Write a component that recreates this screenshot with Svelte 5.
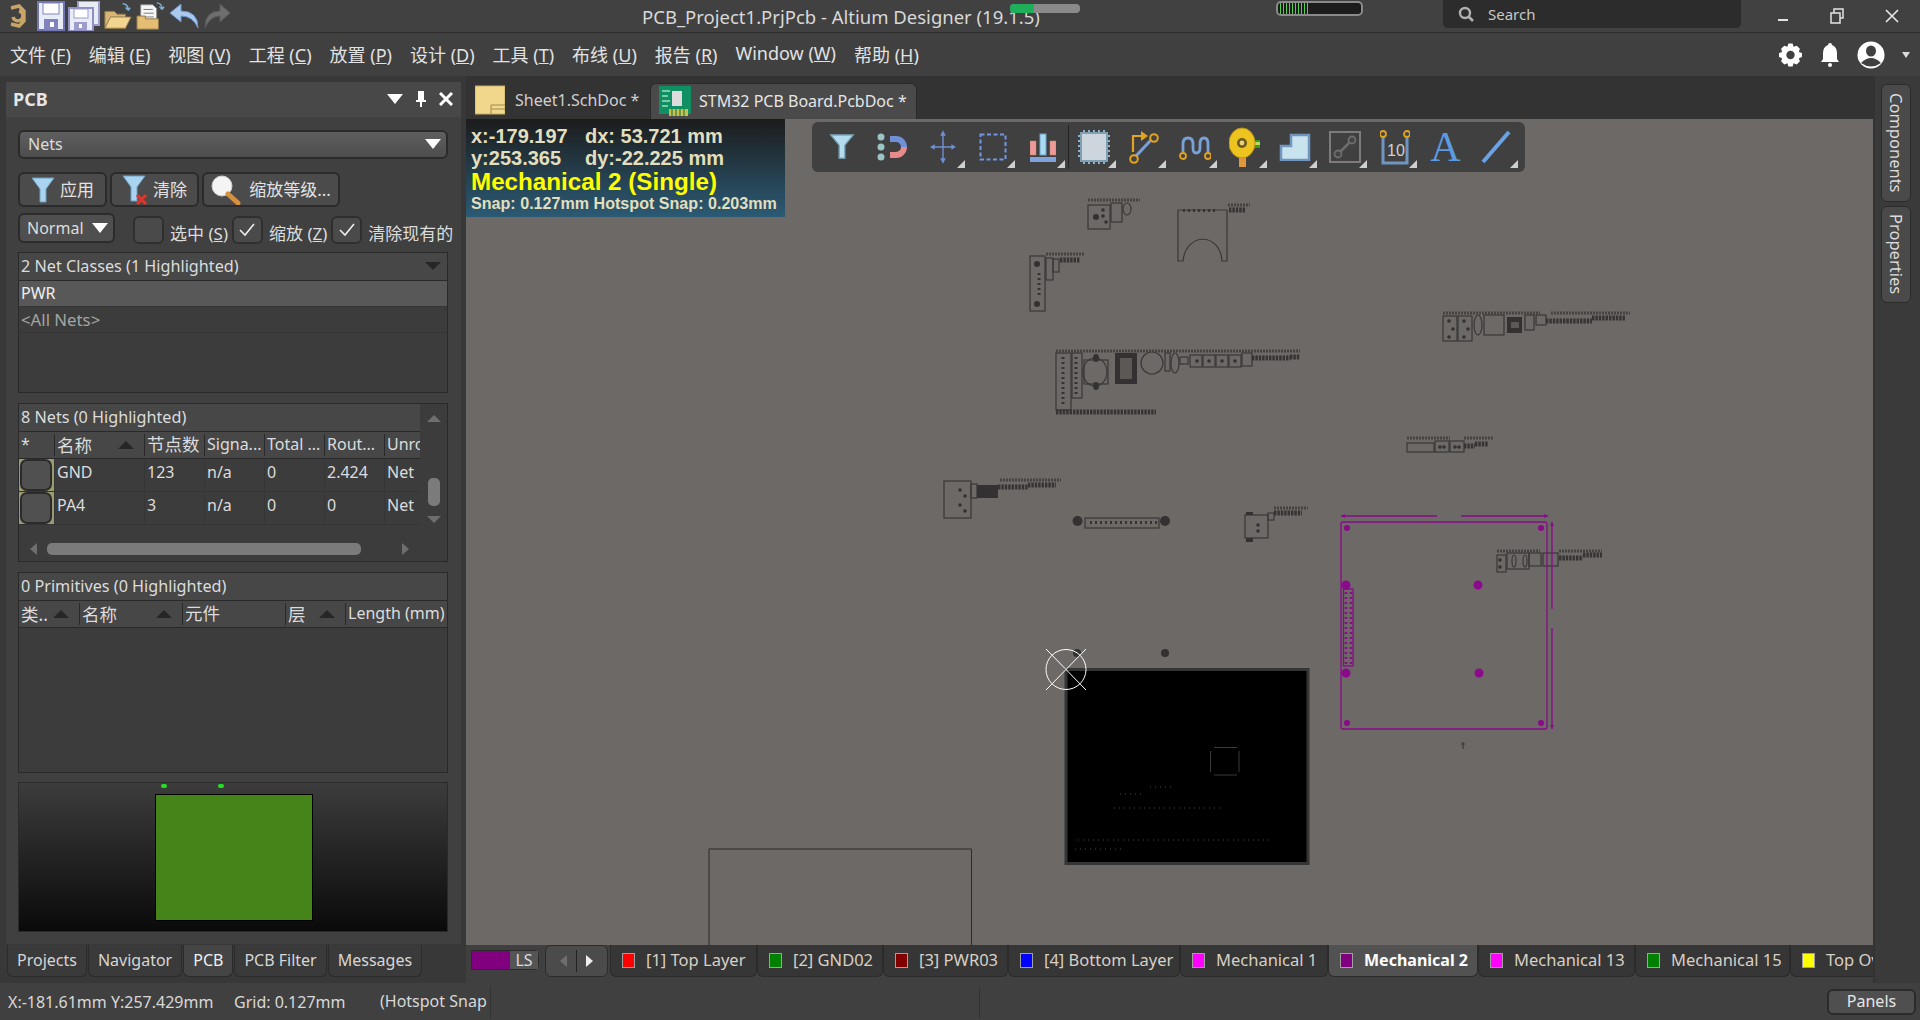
<script>
  const menus = [
    ['文件', 'F'], ['编辑', 'E'], ['视图', 'V'], ['工程', 'C'], ['放置', 'P'], ['设计', 'D'],
    ['工具', 'T'], ['布线', 'U'], ['报告', 'R'], ['Window', 'W'], ['帮助', 'H']
  ];

  const nets = [
    { name: 'GND', nodes: 123, signal: 'n/a', total: 0, routed: '2.424', unrouted: 'Net' },
    { name: 'PA4', nodes: 3, signal: 'n/a', total: 0, routed: '0', unrouted: 'Net' }
  ];

  const layers = [
    { name: '[1] Top Layer', color: '#ff0000', width: 147 },
    { name: '[2] GND02', color: '#008000', width: 126 },
    { name: '[3] PWR03', color: '#800000', width: 125 },
    { name: '[4] Bottom Layer', color: '#0000ff', width: 172 },
    { name: 'Mechanical 1', color: '#ff00ff', width: 148 },
    { name: 'Mechanical 2', color: '#800080', width: 150, active: true },
    { name: 'Mechanical 13', color: '#ff00ff', width: 157 },
    { name: 'Mechanical 15', color: '#008000', width: 155 },
    { name: 'Top Overlay', color: '#ffff00', width: 120 }
  ];

  const bottomTabs = ['Projects', 'Navigator', 'PCB', 'PCB Filter', 'Messages'];

  // footprints on the canvas, in page coordinates
  const outlines = [
    [1088, 205, 22, 24], [1111, 203, 11, 19],
    [1030, 256, 15, 55], [1046, 258, 7, 22], [1053, 259, 6, 13],
    [1056, 353, 15, 57], [1072, 353, 10, 45], [1084, 360, 24, 24],
    [1165, 353, 5, 18], [1180, 357, 8, 7],
    [1190, 355, 12, 12], [1203, 355, 12, 12], [1216, 355, 12, 12], [1229, 355, 12, 12], [1242, 353, 10, 13],
    [1443, 316, 14, 25], [1458, 316, 14, 25], [1484, 315, 20, 20], [1525, 315, 9, 15], [1536, 315, 10, 10],
    [1407, 443, 27, 9], [1435, 441, 14, 11], [1450, 441, 14, 11],
    [944, 481, 27, 37], [971, 484, 6, 14],
    [1085, 518, 74, 10],
    [1245, 515, 23, 23], [1268, 513, 6, 7],
    [1497, 555, 9, 17], [1507, 553, 22, 16], [1529, 553, 12, 13], [1543, 553, 15, 13]
  ];

  const solids = [
    [1115, 353, 22, 31], [1507, 317, 15, 16], [977, 485, 21, 13],
    [1246, 512, 7, 3], [1246, 538, 7, 4]
  ];

  const ovals = [
    [1095, 372, 12, 14], [1152, 363, 11, 11], [1175, 363, 4, 10], [1478, 325, 4, 10],
    [1127, 209, 4, 6], [1514, 561, 2, 6], [1525, 561, 2, 6]
  ];

  const padRows = [
    [1252, 358, 1290, 358], [1290, 357, 1300, 357], [1056, 412, 1156, 412],
    [1546, 321, 1592, 321], [1592, 318, 1625, 318],
    [1464, 446, 1475, 446], [1475, 444, 1488, 444],
    [998, 487, 1028, 487], [1028, 485, 1056, 485],
    [1274, 513, 1302, 513], [1559, 558, 1583, 558], [1583, 555, 1602, 555],
    [1229, 210, 1245, 210], [1060, 260, 1080, 260]
  ];

  const labelRows = [
    [1056, 351, 1300, 351], [1551, 313, 1630, 313], [1443, 313, 1540, 313], [1464, 438, 1493, 438],
    [1407, 438, 1450, 438], [1000, 480, 1061, 480], [1274, 508, 1308, 508], [1559, 551, 1602, 551],
    [1228, 205, 1250, 205], [1046, 254, 1084, 254], [1497, 551, 1540, 551], [1088, 200, 1140, 200]
  ];

  // отверстия внутри футпринтов
  const drills = [
    [1449, 321], [1453, 329], [1449, 337], [1464, 321], [1468, 329], [1464, 337],
    [1103, 210], [1103, 216], [1106, 222], [1258, 525], [1258, 531],
    [960, 490], [965, 496], [960, 505], [965, 511], [1500, 560], [1500, 567],
    [1197, 361], [1209, 361], [1222, 361], [1235, 361], [1440, 447], [1444, 447], [1455, 447], [1459, 447]
  ];

  const boardHoles = [[1347, 528, 3], [1541, 528, 3], [1347, 723, 3], [1541, 723, 3], [1346, 585, 4.5], [1478, 585, 4.5], [1346, 673, 4.5], [1479, 673, 4.5]];
  const boardDots = [[1114, 808, 1224], [1078, 840, 1270], [1075, 849, 1122], [1150, 787, 1175], [1120, 794, 1143]];
</script>

<div class="app">
  <header class="titlebar">
    <div class="quick">
      <svg class="logo" viewBox="0 0 18 24" width="18" height="24">
        <path d="M3 4 L11 2 L16 7 V17 L11 22 L3 20 M11 7 a5 5 0 1 1 -6 6" fill="none" stroke="#c8a567" stroke-width="3.4" />
      </svg>
      <svg viewBox="0 0 28 30" width="28" height="30">
        <rect x="1" y="1" width="26" height="28" fill="#e8ecf6" stroke="#6f74b4" stroke-width="2" />
        <rect x="6" y="2" width="16" height="11" fill="#ffffff" stroke="#7f84bd" />
        <rect x="7" y="18" width="14" height="11" fill="#7f84bd" />
        <rect x="13" y="21" width="4" height="5" fill="#ffffff" />
      </svg>
      <svg viewBox="0 0 32 30" width="32" height="30">
        <rect x="10" y="0" width="21" height="24" fill="#e8ecf6" stroke="#9d9ccc" stroke-width="2" />
        <rect x="1" y="7" width="24" height="23" fill="#e8ecf6" stroke="#8f8fc4" stroke-width="2" />
        <rect x="6" y="8" width="14" height="9" fill="#fff" stroke="#9d9ccc" />
        <rect x="6" y="21" width="13" height="8" fill="#9d9ccc" />
        <rect x="11" y="23" width="3" height="4" fill="#fff" />
      </svg>
      <svg viewBox="0 0 32 30" width="30" height="30">
        <path d="M2 10 H12 L15 13 H24 V28 H2 Z" fill="#d9b676" stroke="#8d7648" />
        <path d="M2 28 L8 16 H30 L24 28 Z" fill="#f3d592" stroke="#8d7648" />
        <path d="M21 2 q5 0 6 6 M27 9 l-3 -3 M27 9 l2 -3" fill="none" stroke="#7fb2d8" stroke-width="1.5" />
      </svg>
      <svg viewBox="0 0 32 30" width="30" height="30">
        <path d="M5 3 H18 L22 7 V22 H5 Z" fill="#f6f6f6" stroke="#8b8b8b" />
        <path d="M8 8 H18 M8 12 H19 M8 16 H19" stroke="#777" />
        <path d="M1 15 H10 V18 H24 V29 H1 Z" fill="#e4bc72" stroke="#8d7648" />
        <path d="M22 1 q5 0 6 6 M28 8 l-3 -3 M28 8 l2 -3" fill="none" stroke="#7fb2d8" stroke-width="1.5" />
      </svg>
      <svg viewBox="0 0 31 30" width="31" height="30">
        <path d="M29 27 Q29 10 12 10 V3 L1 12 L12 21 V15 Q24 15 29 27 Z" fill="#a9c9ee" stroke="#6f96c8" />
      </svg>
      <svg class="redo" viewBox="0 0 28 30" width="28" height="30">
        <path d="M2 27 Q2 10 17 10 V3 L27 12 L17 21 V15 Q7 15 2 27 Z" fill="#6e6e6e" stroke="#5a5a5a" />
      </svg>
    </div>
    <div class="doc-title">PCB_Project1.PrjPcb - Altium Designer (19.1.5)</div>
    <div class="progress"><span></span></div>
    <div class="meter"><span></span></div>
    <div class="search">
      <svg viewBox="0 0 16 16" width="16" height="16"><circle cx="7" cy="7" r="5" fill="none" stroke="#b0b0b0" stroke-width="2.4" /><path d="M10.5 10.5 L15 15" stroke="#b0b0b0" stroke-width="2.6" /></svg>
      <span>Search</span>
    </div>
    <div class="winctl">
      <svg viewBox="0 0 12 12" width="12" height="12"><rect x="1" y="9" width="10" height="2" fill="#e4e4e4" /></svg>
      <svg viewBox="0 0 14 16" width="14" height="16"><rect x="4" y="1" width="9" height="9" fill="none" stroke="#e4e4e4" stroke-width="1.5" /><rect x="1" y="5" width="9" height="10" fill="#404040" stroke="#e4e4e4" stroke-width="1.5" /></svg>
      <svg viewBox="0 0 14 14" width="14" height="14"><path d="M1 1 L13 13 M13 1 L1 13" stroke="#e8e8e8" stroke-width="1.6" /></svg>
    </div>
  </header>

  <nav class="menubar">
    <div class="menus">
      {#each menus as m}
        <span>{m[0]} (<u>{m[1]}</u>)</span>
      {/each}
    </div>
    <div class="usertools">
      <svg viewBox="0 0 24 24" width="25" height="26">
        <path d="M10 1h4l1 3 3-1 3 3-1 3 3 1v4l-3 1 1 3-3 3-3-1-1 3h-4l-1-3-3 1-3-3 1-3-3-1v-4l3-1-1-3 3-3 3 1z" fill="#fff" />
        <circle cx="12" cy="12" r="4" fill="#404040" />
      </svg>
      <svg viewBox="0 0 20 26" width="20" height="26">
        <path d="M10 1 q2 0 2 2 q5 2 5 8 v6 l2 3 H1 l2 -3 v-6 q0 -6 5 -8 q0 -2 2 -2 z" fill="#fff" />
        <circle cx="10" cy="23" r="2" fill="#fff" />
      </svg>
      <svg viewBox="0 0 28 28" width="28" height="28">
        <circle cx="14" cy="14" r="13.5" fill="#fff" />
        <ellipse cx="14" cy="10" rx="5" ry="5.5" fill="#404040" />
        <path d="M4 22 q10 -10 20 0 q-10 7 -20 0z" fill="#404040" />
      </svg>
      <i class="caret-small"></i>
    </div>
  </nav>

  <div class="workspace">
    <aside class="leftcol">
      <section class="panel">
        <div class="panel-head">
          <strong>PCB</strong>
          <div class="panel-tools">
            <i class="caret-white"></i>
            <svg viewBox="0 0 12 16" width="12" height="16"><path d="M3 0 H9 V9 H11 V11 H7 V16 H5 V11 H1 V9 H3 Z" fill="#fff" /></svg>
            <svg viewBox="0 0 14 14" width="14" height="14"><path d="M1 1 L13 13 M13 1 L1 13" stroke="#fff" stroke-width="3" /></svg>
          </div>
        </div>

        <div class="panel-body">
          <div class="dropdown">Nets <i class="caret-white"></i></div>

          <div class="actions">
            <button class="apply">
              <svg viewBox="0 0 24 28" width="24" height="28"><path d="M1 2 H23 L15 13 V26 H9 V13 Z" fill="#a9d3ee" stroke="#6f9fc4" /></svg>
              <span>应用</span>
            </button>
            <button class="clear">
              <svg viewBox="0 0 26 30" width="26" height="30">
                <path d="M1 1 H23 L15 12 V26 H9 V12 Z" fill="#a9d3ee" stroke="#6f9fc4" />
                <path d="M15 20 L24 29 M24 20 L15 29" stroke="#e0352b" stroke-width="3" />
              </svg>
              <span>清除</span>
            </button>
            <button class="zoomlvl">
              <svg viewBox="0 0 30 30" width="30" height="30">
                <circle cx="11" cy="11" r="10" fill="#f4f4f4" stroke="#cfcfcf" />
                <path d="M17 19 L27 28" stroke="#d8903c" stroke-width="5" stroke-linecap="round" />
              </svg>
              <span>缩放等级...</span>
            </button>
          </div>

          <div class="options">
            <div class="mode">Normal <i class="caret-white"></i></div>
            <span class="check"></span><label class="opt-a">选中 (<u>S</u>)</label>
            <span class="check on"><svg viewBox="0 0 16 14" width="16" height="14"><path d="M1 7 L6 12 L15 1" fill="none" stroke="#eee" stroke-width="1.6" /></svg></span>
            <label class="opt-b">缩放 (<u>Z</u>)</label>
            <span class="check on"><svg viewBox="0 0 16 14" width="16" height="14"><path d="M1 7 L6 12 L15 1" fill="none" stroke="#eee" stroke-width="1.6" /></svg></span>
            <label class="opt-c">清除现有的</label>
          </div>

          <div class="box classes">
            <div class="box-head">2 Net Classes (1 Highlighted) <i class="caret-dark"></i></div>
            <div class="row selected">PWR</div>
            <div class="row muted">&lt;All Nets&gt;</div>
          </div>

          <div class="box netsbox">
            <div class="nets-main">
              <div class="box-head">8 Nets (0 Highlighted)</div>
              <div class="grid-row grid-head">
                <div>*</div>
                <div class="sorted"><span class="zh">名称</span> <i class="caret-up"></i></div>
                <div class="zh">节点数</div><div>Signa...</div><div>Total ...</div><div>Rout...</div><div class="clip">Unrouted</div>
              </div>
              {#each nets as n}
                <div class="grid-row net">
                  <div class="swatch"><span></span></div>
                  <div>{n.name}</div><div>{n.nodes}</div><div>{n.signal}</div><div>{n.total}</div><div>{n.routed}</div><div>{n.unrouted}</div>
                </div>
              {/each}
              <div class="hscroll">
                <i class="arrow-left"></i>
                <span class="hthumb"></span>
                <i class="arrow-right"></i>
              </div>
            </div>
            <div class="vscroll">
              <i class="arrow-up"></i>
              <span class="vthumb"></span>
              <i class="arrow-down"></i>
            </div>
          </div>

          <div class="box prims">
            <div class="box-head">0 Primitives (0 Highlighted)</div>
            <div class="prim-head">
              <div class="sorted"><span class="zh">类..</span> <i class="caret-up"></i></div>
              <div class="sorted"><span class="zh">名称</span> <i class="caret-up"></i></div>
              <div class="zh">元件</div>
              <div class="sorted"><span class="zh">层</span> <i class="caret-up"></i></div>
              <div>Length (mm)</div>
            </div>
          </div>

          <div class="preview">
            <i class="tick t1"></i><i class="tick t2"></i>
            <div class="preview-board"></div>
          </div>
        </div>
      </section>

      <div class="bottom-tabs">
        {#each bottomTabs as t}
          <span class:current={t === 'PCB'}>{t}</span>
        {/each}
      </div>
    </aside>

    <main class="center">
      <div class="doc-tabs">
        <div class="doc-tab">
          <svg viewBox="0 0 30 30" width="30" height="30">
            <rect x="0" y="1" width="30" height="28" fill="#f0d78c" />
            <path d="M0 1 H30 V29 H0 Z" fill="none" stroke="#c8ad68" />
            <path d="M16 29 V20 H30 M16 24 H30" fill="none" stroke="#a08a50" />
          </svg>
          Sheet1.SchDoc *
        </div>
        <div class="doc-tab active">
          <svg viewBox="0 0 32 32" width="32" height="32">
            <rect x="0" y="1" width="32" height="28" fill="#0f8f62" />
            <path d="M3 6 H11 M3 11 H9 M3 16 H11 M3 21 H9" stroke="#9be0c0" stroke-width="1.4" />
            <rect x="13" y="6" width="10" height="15" fill="#dcdcdc" />
            <rect x="10" y="24" width="19" height="7" fill="#c9c24a" />
            <path d="M13 24 V31 M17 24 V31 M21 24 V31 M25 24 V31" stroke="#0f6f4a" />
          </svg>
          STM32 PCB Board.PcbDoc *
        </div>
      </div>

      <div class="canvas">
        <svg class="pcb" viewBox="466 119 1407 826" preserveAspectRatio="none">
          <!-- контур платы внизу -->
          <path d="M709 945 V849 H971.5 V945" class="line" />

          {#each outlines as r}
            <rect x={r[0]} y={r[1]} width={r[2]} height={r[3]} class="part" />
          {/each}
          {#each solids as r}
            <rect x={r[0]} y={r[1]} width={r[2]} height={r[3]} class="solid" />
          {/each}
          {#each ovals as o}
            <ellipse cx={o[0]} cy={o[1]} rx={o[2]} ry={o[3]} class="part" />
          {/each}
          {#each padRows as p}
            <line x1={p[0]} y1={p[1]} x2={p[2]} y2={p[3]} class="pads" />
          {/each}
          {#each labelRows as p}
            <line x1={p[0]} y1={p[1]} x2={p[2]} y2={p[3]} class="labels" />
          {/each}
          {#each drills as d}
            <circle cx={d[0]} cy={d[1]} r="1.8" class="solid" />
          {/each}

          <path d="M1178 210 H1227 V261 H1222 C1220 232 1186 232 1183 261 H1178 Z" class="part" />
          <path d="M1183 210.5 H1215" class="pads thin" />
          <rect x="1120" y="358" width="12" height="21" class="chip-core" />
          <rect x="1511" y="322" width="8" height="6" class="chip-core" />
          <line x1="1063" y1="357" x2="1063" y2="406" class="pads thin" />
          <line x1="1076" y1="357" x2="1076" y2="396" class="pads thin" />
          <line x1="1039" y1="273" x2="1039" y2="296" class="pads thin" />
          <line x1="1090" y1="522.5" x2="1157" y2="522.5" class="pads thin" />
          <ellipse cx="1096" cy="358" rx="3" ry="4" class="solid" />
          <ellipse cx="1096" cy="386" rx="3" ry="4" class="solid" />
          <circle cx="1037" cy="264" r="3" class="solid" />
          <circle cx="1037" cy="304" r="3" class="solid" />
          <circle cx="1096" cy="217" r="3" class="solid" />
          <circle cx="1077.5" cy="521" r="5" class="solid" />
          <circle cx="1165" cy="521" r="5" class="solid" />
          <circle cx="1077" cy="653" r="4" class="solid" />
          <circle cx="1165" cy="653" r="4" class="solid" />
          <path d="M1463 742 V749 M1461 744 H1465" class="part" />

          <!-- механический слой -->
          <rect x="1341" y="522" width="206" height="207" rx="2" class="mech" />
          <path d="M1341 516 H1437 M1461 516 H1548 M1552 522 V609 M1552 628 V729" class="mech" />
          <path d="M1341 516 l4 -2 v4 z M1548 516 l-4 -2 v4 z M1552 522 l-2 4 h4 z M1552 729 l-2 -4 h4 z" class="mech-fill" />
          <rect x="1343.5" y="589" width="9.5" height="77" class="mech" />
          <line x1="1346" y1="592" x2="1346" y2="664" class="mech-dots" />
          <line x1="1351" y1="592" x2="1351" y2="664" class="mech-dots" />
          {#each boardHoles as h}
            <circle cx={h[0]} cy={h[1]} r={h[2]} class="mech-fill" />
          {/each}

          <!-- чёрная плата -->
          <rect x="1066" y="669.5" width="242" height="194" class="pcb-board" />
          <path d="M1214 747.5 H1237 M1214 775 H1237 M1210.5 751 V772 M1239 751 V772" class="chip-mark" />
          {#each boardDots as d}
            <line x1={d[0]} y1={d[1]} x2={d[2]} y2={d[1]} class="board-dots" />
          {/each}

          <!-- курсор -->
          <circle cx="1066" cy="669.5" r="20" class="cursor" />
          <path d="M1046 649 L1086 690 M1086 649 L1046 690" class="cursor" />
        </svg>

        <div class="hud">
          <div class="hud-row"><span class="hud-x">x:-179.197</span><span>dx: 53.721 mm</span></div>
          <div class="hud-row"><span class="hud-x">y:253.365</span><span>dy:-22.225 mm</span></div>
          <div class="hud-layer">Mechanical 2 (Single)</div>
          <div class="hud-snap">Snap: 0.127mm Hotspot Snap: 0.203mm</div>
        </div>

        <div class="toolbar">
          <span class="tool">
            <svg viewBox="0 0 28 32" width="26" height="30"><path d="M2 3 H26 L17 14 V28 H11 V14 Z" fill="#b5dcee" stroke="#7ba7bd" stroke-width="1.5" /></svg>
          </span>
          <span class="tool">
            <svg viewBox="0 0 32 30" width="32" height="30">
              <path d="M14 4 H20 A11 11 0 0 1 31 15 H25 A5 5 0 0 0 20 10 H14 Z" fill="#6f8fd6" />
              <path d="M14 20 H20 A5 5 0 0 0 25 15 H31 A11 11 0 0 1 20 26 H14 Z" fill="#e88a8a" />
              <circle cx="5" cy="5" r="3.5" fill="#9cc4c4" /><circle cx="5" cy="15" r="3.5" fill="#9cc4c4" /><circle cx="5" cy="25" r="3.5" fill="#9cc4c4" />
            </svg>
          </span>
          <span class="tool more">
            <svg viewBox="0 0 28 36" width="26" height="36"><path d="M14 3 V33 M2 18 H26" fill="none" stroke="#6f8fd6" stroke-width="1.5" /><path d="M14 0 l-3 6 h6 z M14 36 l-3 -6 h6 z M0 18 l5 -3 v6 z M28 18 l-5 -3 v6 z" fill="#6f8fd6" /></svg>
          </span>
          <span class="tool more">
            <svg viewBox="0 0 28 28" width="28" height="28"><rect x="1.5" y="1.5" width="25" height="25" fill="none" stroke="#7196e8" stroke-width="2" stroke-dasharray="4 2.5" /></svg>
          </span>
          <span class="tool more">
            <svg viewBox="0 0 26 30" width="26" height="30">
              <rect x="0" y="9" width="6" height="14" fill="#ee9a9a" stroke="#b86" stroke-width=".5" />
              <rect x="10" y="2" width="6" height="21" fill="#a9dcec" stroke="#6f9fd6" />
              <rect x="20" y="9" width="6" height="14" fill="#ee9a9a" stroke="#b86" stroke-width=".5" />
              <rect x="0" y="25" width="26" height="5" fill="#7fa4dc" />
            </svg>
          </span>
          <span class="sep"></span>
          <span class="tool more">
            <svg viewBox="0 0 32 34" width="32" height="34">
              <path d="M6 0 V34 M11 0 V34 M16 0 V34 M21 0 V34 M26 0 V34 M0 6 H32 M0 11 H32 M0 16 H32 M0 21 H32 M0 26 H32" stroke="#8fb3c8" stroke-width="2" />
              <rect x="3" y="3" width="26" height="28" fill="#cdd6dc" stroke="#7f9fb4" stroke-width="2" />
            </svg>
          </span>
          <span class="tool more">
            <svg viewBox="0 0 30 34" width="30" height="34">
              <path d="M4 22 V6 H14" fill="none" stroke="#e2a31f" stroke-width="2.2" />
              <path d="M12 1 L19 6 L12 11 Z" fill="#e2a31f" />
              <path d="M7 26 L22 10" stroke="#7aa0d8" stroke-width="3" />
              <circle cx="5" cy="29" r="3.8" fill="#444" stroke="#e2a31f" stroke-width="2" />
              <circle cx="25" cy="8" r="3.8" fill="#444" stroke="#e2a31f" stroke-width="2" />
            </svg>
          </span>
          <span class="tool more">
            <svg viewBox="0 0 32 28" width="32" height="28">
              <path d="M4 19 V11 Q4 5 9 5 Q14 5 14 11 V15 Q14 20 17 20 Q21 20 21 15 V11 Q21 5 25 5 Q29 5 29 11 V19" fill="none" stroke="#7aa0d8" stroke-width="2.8" />
              <circle cx="4" cy="23" r="3" fill="#444" stroke="#e2a31f" stroke-width="1.8" />
              <circle cx="29" cy="23" r="3" fill="#444" stroke="#e2a31f" stroke-width="1.8" />
            </svg>
          </span>
          <span class="tool more">
            <svg viewBox="0 0 32 40" width="32" height="40">
              <rect x="17" y="13" width="14" height="8" fill="#35a01c" />
              <rect x="17" y="15" width="14" height="3" fill="#bcd86a" />
              <rect x="10" y="26" width="7" height="14" fill="#e2963a" />
              <ellipse cx="13" cy="16" rx="13" ry="15" fill="#ecc31f" stroke="#b8941a" />
              <circle cx="13" cy="16" r="5" fill="#6a5a20" />
              <circle cx="13" cy="16" r="2.4" fill="#e8d27a" />
            </svg>
          </span>
          <span class="tool more">
            <svg viewBox="0 0 32 28" width="32" height="28"><path d="M2 27 V13 H12 V2 H30 V27 Z" fill="#c9e3ee" stroke="#7096c0" stroke-width="2.5" /></svg>
          </span>
          <span class="tool more">
            <svg viewBox="0 0 32 32" width="32" height="32">
              <rect x="1" y="1" width="30" height="30" fill="none" stroke="#7c7c7c" stroke-width="2" />
              <path d="M9 23 L23 9" stroke="#6e6e6e" stroke-width="2.5" />
              <circle cx="9" cy="23" r="3.5" fill="#444" stroke="#6e6e6e" stroke-width="1.8" />
              <circle cx="23" cy="9" r="3.5" fill="#444" stroke="#6e6e6e" stroke-width="1.8" />
            </svg>
          </span>
          <span class="tool more">
            <svg viewBox="0 0 30 36" width="30" height="36">
              <path d="M3 8 V34 H27 V8" fill="none" stroke="#7096c0" stroke-width="3" />
              <circle cx="3" cy="5" r="3" fill="#444" stroke="#e2a31f" stroke-width="1.8" />
              <circle cx="27" cy="5" r="3" fill="#444" stroke="#e2a31f" stroke-width="1.8" />
              <text x="7" y="27" class="ten">10</text>
            </svg>
          </span>
          <span class="tool letter-a">A</span>
          <span class="tool more">
            <svg viewBox="0 0 30 34" width="30" height="34"><path d="M2 32 L28 2" stroke="#6aa3e4" stroke-width="4" /></svg>
          </span>
        </div>
      </div>

      <div class="layerbar">
        <div class="ls"><span class="ls-color"></span><span class="ls-text">LS</span></div>
        <div class="layer-nav"><i class="arrow-left dim"></i><span></span><i class="arrow-right bright"></i></div>
        <div class="layer-tabs">
          {#each layers as l}
            <div class="layer" class:active={l.active} style="flex-basis:{l.width}px">
              <span class="chip" style="background:{l.color}"></span>{l.name}
            </div>
          {/each}
        </div>
      </div>
    </main>

    <aside class="rightcol">
      <div class="sidetab comp">Components</div>
      <div class="sidetab prop">Properties</div>
    </aside>
  </div>

  <footer class="statusbar">
    <div class="stat coords">X:-181.61mm Y:257.429mm</div>
    <div class="stat grid-size">Grid: 0.127mm</div>
    <div class="stat hotspot">(Hotspot Snap</div>
    <div class="spacer"></div>
    <div class="panels">Panels</div>
  </footer>
</div>

<style>
  :global(body) {
    margin: 0;
    background: #404040;
  }

  .app {
    width: 1920px;
    height: 1020px;
    display: flex;
    flex-direction: column;
    overflow: hidden;
    background: #404040;
    color: #dcdcdc;
    font-family: "Noto Sans", "Noto Sans CJK SC", sans-serif;
    font-size: 16px;
  }

  i {
    display: inline-block;
  }

  .zh {
    font-size: 17.5px;
  }

  /* title */
  .titlebar {
    position: relative;
    flex: 0 0 33px;
    box-sizing: border-box;
    display: flex;
    align-items: center;
    background: #414141;
    border-bottom: 1px solid #2e2e2e;
    padding-left: 8px;
  }

  .quick {
    display: flex;
    align-items: center;
    width: 634px;
    flex: none;
    gap: 3px;
    height: 32px;
  }

  .quick .logo {
    margin-right: 8px;
  }

  .doc-title {
    width: 801px;
    flex: none;
    font-size: 18.5px;
    color: #d8d8d8;
    white-space: nowrap;
  }

  .progress {
    position: absolute;
    left: 1010px;
    top: 4px;
    width: 70px;
    height: 9px;
    border-radius: 4px;
    background: #8a8a8a;
    overflow: hidden;
  }

  .progress span {
    display: block;
    width: 24px;
    height: 100%;
    background: #1fae5a;
  }

  .meter {
    position: absolute;
    left: 1276px;
    top: 1px;
    width: 87px;
    height: 15px;
    box-sizing: border-box;
    border: 2px solid #8a8a8a;
    border-radius: 5px;
    background: #1c1c1c;
  }

  .meter span {
    display: block;
    width: 30px;
    height: 100%;
    margin-left: 2px;
    background: repeating-linear-gradient(90deg, #4fd34f 0 1px, #1c1c1c 1px 3px);
  }

  .search {
    flex: none;
    box-sizing: border-box;
    width: 298px;
    height: 28px;
    align-self: flex-start;
    display: flex;
    align-items: center;
    gap: 14px;
    padding-left: 15px;
    background: #2c2c2c;
    border-radius: 0 0 5px 5px;
    font-size: 15px;
    color: #c8c8c8;
  }

  .winctl {
    display: flex;
    align-items: center;
    gap: 41px;
    margin-left: 36px;
  }

  /* menu */
  .menubar {
    flex: 0 0 43px;
    display: flex;
    align-items: center;
    justify-content: space-between;
    padding: 0 10px;
    background: #404040;
  }

  .menus {
    display: flex;
    gap: 18px;
    margin-top: -1px;
    font-size: 18px;
    color: #e2e2e2;
  }

  .usertools {
    display: flex;
    align-items: center;
    gap: 17px;
  }

  .caret-small {
    width: 0;
    height: 0;
    margin-left: 0;
    border: 4px solid transparent;
    border-top: 6px solid #dcdcdc;
    border-bottom: 0;
  }

  .caret-white {
    width: 0;
    height: 0;
    border: 8px solid transparent;
    border-top: 10px solid #fff;
    border-bottom: 0;
  }

  .caret-dark {
    width: 0;
    height: 0;
    border: 8px solid transparent;
    border-top: 8px solid #262626;
    border-bottom: 0;
  }

  .caret-up {
    width: 0;
    height: 0;
    border: 8px solid transparent;
    border-bottom: 8px solid #262626;
    border-top: 0;
  }

  /* workspace */
  .workspace {
    flex: 0 0 907px;
    display: flex;
    background: #333;
  }

  .leftcol {
    flex: 0 0 466px;
    display: flex;
    flex-direction: column;
    padding-top: 6px;
    box-sizing: border-box;
    background: #383838;
  }

  .panel {
    box-sizing: border-box;
    width: 455px;
    height: 862px;
    margin-left: 6px;
    background: #404040;
    display: flex;
    flex-direction: column;
  }

  .panel-head {
    flex: 0 0 35px;
    box-sizing: border-box;
    display: flex;
    align-items: center;
    justify-content: space-between;
    padding: 0 8px 2px 7px;
    background: #484848;
    font-size: 18px;
    color: #e6e6e6;
  }

  .panel-tools {
    display: flex;
    align-items: center;
    gap: 12px;
  }

  .panel-body {
    display: flex;
    flex-direction: column;
    padding: 13px 13px 0 12px;
  }

  .dropdown {
    height: 29px;
    box-sizing: border-box;
    display: flex;
    align-items: center;
    justify-content: space-between;
    padding: 0 5px 2px 8px;
    border: 2px solid #2b2b2b;
    border-radius: 6px;
    background: linear-gradient(#5f5f5f, #4d4d4d);
    font-size: 16px;
  }

  .actions {
    display: flex;
    gap: 3px;
    margin-top: 13px;
    height: 35px;
  }

  button {
    box-sizing: border-box;
    display: flex;
    align-items: center;
    justify-content: center;
    gap: 5px;
    padding: 0;
    border: 2px solid #2b2b2b;
    border-radius: 6px;
    background: #4b4b4b;
    color: #e2e2e2;
    font: inherit;
    font-size: 17px;
  }

  button span {
    margin-top: -3px;
  }

  .apply, .clear {
    width: 89px;
  }

  .zoomlvl {
    width: 138px;
    gap: 8px;
  }

  .options {
    display: flex;
    align-items: center;
    margin-top: 6px;
    height: 30px;
    white-space: nowrap;
    font-size: 17px;
    position: relative;
  }

  .mode {
    flex: none;
    box-sizing: border-box;
    width: 97px;
    height: 30px;
    display: flex;
    align-items: center;
    gap: 8px;
    padding-left: 7px;
    border: 2px solid #2b2b2b;
    border-radius: 6px;
    background: #4f4f4f;
    font-size: 16px;
  }

  .check {
    flex: none;
    box-sizing: border-box;
    width: 31px;
    height: 28px;
    margin-top: 4px;
    margin-left: 18px;
    display: flex;
    align-items: center;
    justify-content: center;
    border: 2px solid #2f2f2f;
    border-radius: 6px;
    background: #4a4a4a;
  }

  .check.on {
    margin-left: 4px;
  }

  .options label {
    flex: none;
    margin-top: 8px;
    margin-left: 6px;
  }

  .box {
    box-sizing: border-box;
    background: #3c3c3c;
    border: 1px solid #2a2a2a;
  }

  .box-head {
    box-sizing: border-box;
    height: 28px;
    display: flex;
    align-items: center;
    justify-content: space-between;
    padding: 0 6px 2px 2px;
    background: #474747;
    border-bottom: 1px solid #2a2a2a;
    font-size: 16.2px;
    white-space: nowrap;
  }

  .classes {
    height: 141px;
    margin-top: 9px;
  }

  .row {
    box-sizing: border-box;
    height: 26px;
    display: flex;
    align-items: center;
    padding: 0 0 2px 2px;
    border-bottom: 1px solid #353535;
    font-size: 16px;
  }

  .row.selected {
    background: #585858;
    color: #f0f0f0;
  }

  .row.muted {
    padding-bottom: 0;
    font-size: 16.8px;
    color: #a4a4a4;
  }

  .netsbox {
    height: 159px;
    margin-top: 10px;
    display: flex;
  }

  .nets-main {
    width: 401px;
    flex: none;
    overflow: hidden;
  }

  .grid-row {
    box-sizing: border-box;
    display: grid;
    grid-template-columns: 35px 90px 60px 60px 60px 60px 36px;
    white-space: nowrap;
    overflow: hidden;
  }

  .grid-row > div {
    box-sizing: border-box;
    padding-left: 2px;
    overflow: hidden;
  }

  .grid-head {
    height: 27px;
    align-items: center;
    background: #474747;
    border-bottom: 1px solid #2a2a2a;
    font-size: 16px;
  }

  .grid-head > div {
    border-left: 1px solid #2a2a2a;
    height: 22px;
    line-height: 20px;
  }

  .grid-head > div:first-child {
    border-left: 0;
  }

  .grid-row > .zh,
  .grid-row > .sorted,
  .prim-head > .zh,
  .prim-head > .sorted {
    overflow: visible;
  }

  .sorted {
    display: flex;
    align-items: center;
    justify-content: space-between;
    padding-right: 10px;
  }

  .grid-row > .sorted {
    padding-right: 10px;
  }

  .net {
    height: 33px;
    align-items: center;
    border-bottom: 1px solid #353535;
    font-size: 16px;
  }

  .net > div {
    height: 100%;
    line-height: 26px;
    border-left: 1px solid #363636;
  }

  .net > .swatch {
    border-left: 0;
    display: flex;
    background: #9a9a70;
    padding: 0 2px 0 1px;
  }

  .swatch span {
    flex: 1;
    border: 2px solid #2b2b2b;
    border-radius: 7px;
    background: #505050;
  }

  .hscroll {
    display: flex;
    align-items: center;
    height: 12px;
    margin-top: 18px;
    padding-left: 11px;
  }

  .hthumb {
    width: 314px;
    height: 12px;
    margin-left: 10px;
    border-radius: 5px;
    background: #7b7b7b;
  }

  .arrow-left {
    width: 0;
    height: 0;
    border: 6px solid transparent;
    border-right: 7px solid #6e6e6e;
    border-left: 0;
  }

  .arrow-right {
    width: 0;
    height: 0;
    margin-left: 41px;
    border: 6px solid transparent;
    border-left: 7px solid #6e6e6e;
    border-right: 0;
  }

  .vscroll {
    flex: 1;
    display: flex;
    flex-direction: column;
    align-items: center;
    padding-top: 11px;
  }

  .arrow-up {
    width: 0;
    height: 0;
    border: 7px solid transparent;
    border-bottom: 7px solid #6e6e6e;
    border-top: 0;
  }

  .arrow-down {
    width: 0;
    height: 0;
    margin-top: 10px;
    border: 7px solid transparent;
    border-top: 7px solid #6e6e6e;
    border-bottom: 0;
  }

  .vthumb {
    width: 12px;
    height: 28px;
    margin-top: 56px;
    border-radius: 5px;
    background: #7b7b7b;
  }

  .prims {
    height: 201px;
    margin-top: 10px;
  }

  .prim-head {
    box-sizing: border-box;
    display: grid;
    grid-template-columns: 60px 103px 103px 60px 1fr;
    height: 27px;
    align-items: center;
    background: #474747;
    border-bottom: 1px solid #2a2a2a;
    white-space: nowrap;
    font-size: 16px;
  }

  .prim-head > div {
    height: 22px;
    line-height: 20px;
    box-sizing: border-box;
    padding-left: 2px;
    border-left: 1px solid #2a2a2a;
    overflow: hidden;
  }

  .prim-head > div:first-child {
    border-left: 0;
  }

  .preview {
    position: relative;
    box-sizing: border-box;
    height: 150px;
    margin-top: 9px;
    border: 1px solid #2a2a2a;
    background: linear-gradient(#3c3c3c, #0a0a0a);
  }

  .preview-board {
    position: absolute;
    left: 136px;
    top: 11px;
    width: 158px;
    height: 127px;
    box-sizing: border-box;
    border: 1px solid #000;
    background: #448418;
  }

  .tick {
    position: absolute;
    top: 1px;
    width: 6px;
    height: 4px;
    border-radius: 3px;
    background: #22e022;
  }

  .t1 { left: 142px; }
  .t2 { left: 199px; }

  .bottom-tabs {
    display: flex;
    margin: 1px 0 0 7px;
    height: 32px;
    font-size: 16px;
    gap: 1px;
  }

  .bottom-tabs span {
    box-sizing: border-box;
    padding: 0 9px 2px;
    display: flex;
    align-items: center;
    background: #3a3a3a;
    border: 1px solid #2b2b2b;
    border-top: 0;
    border-radius: 0 0 6px 6px;
    color: #d6d6d6;
  }

  .bottom-tabs span.current {
    background: #454545;
    color: #f0f0f0;
  }

  /* center */
  .center {
    flex: 0 0 1407px;
    display: flex;
    flex-direction: column;
    min-width: 0;
  }

  .doc-tabs {
    flex: 0 0 43px;
    box-sizing: border-box;
    display: flex;
    align-items: flex-end;
    gap: 2px;
    background: #333;
    font-size: 16px;
  }

  .doc-tab {
    box-sizing: border-box;
    height: 36px;
    width: 182px;
    display: flex;
    align-items: center;
    gap: 10px;
    padding: 0 0 2px 9px;
    white-space: nowrap;
    color: #cfcfcf;
  }

  .doc-tab.active {
    width: 267px;
    gap: 8px;
    padding-left: 8px;
    background: #4a4a4a;
    border: 1px solid #2a2a2a;
    border-bottom: 0;
    border-radius: 6px 6px 0 0;
    color: #e6e6e6;
  }

  .canvas {
    position: relative;
    flex: 0 0 826px;
    background: #6d6967;
    overflow: hidden;
  }

  .pcb {
    display: block;
    width: 100%;
    height: 100%;
  }

  .line {
    fill: none;
    stroke: #2c2c2c;
    stroke-width: 1;
  }

  .part {
    fill: none;
    stroke: #3a3838;
    stroke-width: 1.2;
  }

  .solid {
    fill: #333131;
  }

  .chip-core {
    fill: #5b5856;
  }

  .pads {
    stroke: #353333;
    stroke-width: 5;
    stroke-dasharray: 2.4 1;
    fill: none;
  }

  .pads.thin {
    stroke-width: 3;
    stroke-dasharray: 2 3;
  }

  .labels {
    stroke: #454241;
    stroke-width: 3;
    stroke-dasharray: 2 1;
  }

  .mech {
    fill: none;
    stroke: #8b0a8b;
    stroke-width: 1.3;
  }

  .mech-fill {
    fill: #8b0a8b;
  }

  .mech-dots {
    stroke: #8b0a8b;
    stroke-width: 2.5;
    stroke-dasharray: 2 3;
  }

  .pcb-board {
    fill: #000;
    stroke: #353535;
    stroke-width: 3;
  }

  .chip-mark {
    fill: none;
    stroke: #3a3a3a;
  }

  .board-dots {
    stroke: #4a4a4a;
    stroke-width: 1;
    stroke-dasharray: 1 4;
  }

  .cursor {
    fill: none;
    stroke: #fff;
    stroke-width: 1;
  }

  .hud {
    position: absolute;
    left: 0;
    top: 0;
    width: 319px;
    height: 98px;
    box-sizing: border-box;
    padding: 6px 0 0 5px;
    background: linear-gradient(#1c1c1c, #2b5a74);
    font-family: "Liberation Sans", Arial, sans-serif;
    font-weight: 700;
    color: #e2dfbe;
  }

  .hud-row {
    display: flex;
    font-size: 20px;
    line-height: 22px;
    white-space: nowrap;
  }

  .hud-x {
    width: 114px;
  }

  .hud-layer {
    font-size: 24.2px;
    line-height: 26px;
    color: #ff0;
    white-space: nowrap;
  }

  .hud-snap {
    font-size: 16.1px;
    line-height: 17px;
    white-space: nowrap;
  }

  .toolbar {
    position: absolute;
    left: 346px;
    top: 3px;
    width: 713px;
    height: 50px;
    display: flex;
    align-items: center;
    box-sizing: border-box;
    padding-left: 5px;
    background: #404040;
    border-radius: 6px;
  }

  .tool {
    position: relative;
    flex: 0 0 50px;
    height: 50px;
    margin-left: .2px;
    display: flex;
    align-items: center;
    justify-content: center;
  }

  .tool.more::after {
    content: "";
    position: absolute;
    right: 3px;
    bottom: 4px;
    border-left: 8px solid transparent;
    border-bottom: 8px solid #cfcfcf;
  }

  .sep {
    flex: none;
    width: 1px;
    height: 44px;
    background: #222;
  }

  .ten {
    font-family: "Liberation Sans", Arial, sans-serif;
    font-size: 16px;
    fill: #d0d0d0;
  }

  .letter-a {
    font-family: "Liberation Serif", "Times New Roman", serif;
    font-size: 42px;
    color: #5b9be0;
  }

  /* layers */
  .layerbar {
    flex: 0 0 38px;
    display: flex;
    align-items: flex-start;
    background: #404040;
    font-size: 16px;
  }

  .ls {
    display: flex;
    height: 20px;
    margin: 5px 0 0 5px;
    width: 68px;
    flex: none;
    box-sizing: border-box;
    border: 1px solid #2b2b2b;
    border-radius: 0 5px 5px 0;
  }

  .ls-color {
    width: 38px;
    background: #800080;
  }

  .ls-text {
    flex: 1;
    text-align: center;
    background: #555;
    line-height: 18px;
  }

  .layer-nav {
    flex: none;
    box-sizing: border-box;
    width: 63px;
    height: 32px;
    margin-left: 6px;
    display: flex;
    align-items: center;
    justify-content: space-between;
    padding: 0 14px;
    background: #4b4b4b;
    border: 1px solid #2b2b2b;
    border-radius: 6px;
  }

  .layer-nav span {
    width: 1px;
    height: 22px;
    background: #222;
  }

  .layer-nav .arrow-right {
    margin-left: 0;
  }

  .arrow-right.bright {
    border-left-color: #eee;
  }

  .layer-tabs {
    flex: 1;
    min-width: 0;
    display: flex;
    overflow: hidden;
    margin-left: 2px;
  }

  .layer {
    flex: 0 0 auto;
    box-sizing: border-box;
    height: 32px;
    display: flex;
    align-items: center;
    gap: 11px;
    padding: 0 0 2px 11px;
    white-space: nowrap;
    background: #363636;
    border: 1px solid #2b2b2b;
    border-top: 0;
    border-radius: 0 0 6px 6px;
    color: #d8d0c4;
    font-size: 16.5px;
  }

  .layer.active {
    background: #525252;
    color: #fff;
    font-weight: 700;
    font-size: 16px;
  }

  .chip {
    flex: none;
    width: 13px;
    height: 15px;
    margin-top: 2px;
    box-sizing: border-box;
    border: 1px solid #a0a0a0;
  }

  /* right */
  .rightcol {
    flex: 1;
    display: flex;
    flex-direction: column;
    gap: 4px;
    align-items: flex-start;
    padding: 8px 0 0 6px;
    background: #3a3a3a;
    box-sizing: border-box;
    border-left: 2px solid #333;
  }

  .sidetab {
    box-sizing: border-box;
    width: 30px;
    writing-mode: vertical-rl;
    display: flex;
    align-items: center;
    justify-content: center;
    background: #4a4a4a;
    border: 1px solid #2b2b2b;
    border-radius: 6px;
    font-size: 16.5px;
    color: #dcdcdc;
  }

  .comp {
    height: 118px;
  }

  .prop {
    height: 97px;
  }

  /* status */
  .statusbar {
    flex: 1;
    display: flex;
    align-items: center;
    padding: 0 4px 0 8px;
    background: #404040;
    font-size: 16px;
    color: #d8d8d8;
    white-space: nowrap;
  }

  .coords {
    width: 226px;
  }

  .grid-size {
    width: 146px;
  }

  .hotspot {
    width: 110px;
    overflow: hidden;
    height: 32px;
    line-height: 30px;
    border-right: 1px solid #333;
  }

  .spacer {
    width: 488px;
    height: 32px;
    border-right: 1px solid #333;
  }

  .panels {
    margin-left: auto;
    box-sizing: border-box;
    width: 89px;
    height: 26px;
    display: flex;
    align-items: center;
    justify-content: center;
    padding-bottom: 1px;
    background: #4f4f4f;
    border: 2px solid #2b2b2b;
    border-radius: 6px;
    color: #e6e6e6;
  }
</style>
